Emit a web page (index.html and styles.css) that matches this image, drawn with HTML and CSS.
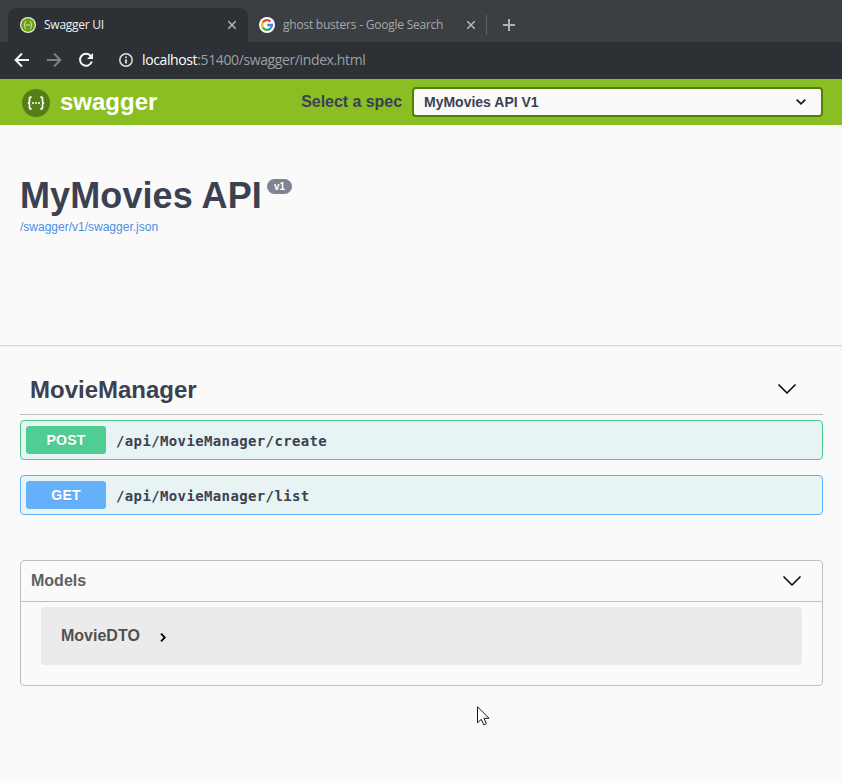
FILE: index.html
```html
<!DOCTYPE html>
<html lang="en">
<head>
<meta charset="utf-8">
<title>Swagger UI</title>
<link rel="stylesheet" href="styles.css">
</head>
<body>
<header class="browser">
  <div class="tabs">
    <div class="tab tab-active">
      <svg class="favicon" viewBox="0 0 16 16"><circle cx="8" cy="8" r="8" fill="#e8f0dc"/><circle cx="8" cy="8" r="6.8" fill="#6a9e12"/><path d="M6.2 4.2Q4.9 4.2 4.9 5.5V7L4 8l.9 1v1.5q0 1.3 1.3 1.3M9.8 4.2q1.3 0 1.3 1.3V7l.9 1-.9 1v1.5q0 1.3-1.3 1.3M5.8 8h4.4" fill="none" stroke="#d4e8b0" stroke-width="1"/></svg>
      <span class="tab-title title-swagger">Swagger UI</span>
      <svg class="close" viewBox="0 0 8 8"><path d="M.3.3l7.4 7.4M7.7.3L.3 7.7"/></svg>
    </div>
    <div class="tab tab-idle">
      <svg class="favicon" viewBox="0 0 16 16"><circle cx="8" cy="8" r="8" fill="#fff"/><g fill="none" stroke-width="2.3"><path d="M3.9 5.4A4.8 4.8 0 0 1 11.4 4.6" stroke="#ea4335"/><path d="M3.9 5.4A4.8 4.8 0 0 0 3.9 10.6" stroke="#fbbc05"/><path d="M3.9 10.6A4.8 4.8 0 0 0 11.2 11.6" stroke="#34a853"/><path d="M11.2 11.6A4.8 4.8 0 0 0 12.9 8H8.2" stroke="#4285f4"/></g></svg>
      <span class="tab-title title-google">ghost busters - Google Search</span>
      <svg class="close" viewBox="0 0 8 8"><path d="M.3.3l7.4 7.4M7.7.3L.3 7.7"/></svg>
    </div>
    <svg class="plus" viewBox="0 0 12 12"><path d="M6 0v12M0 6h12"/></svg>
  </div>
  <div class="toolbar">
    <svg class="nav" viewBox="0 0 16 16"><path d="M15 8H2M8 1.5L1.6 8 8 14.5"/></svg>
    <svg class="nav nav-off" viewBox="0 0 16 16"><path d="M1 8h13M8 1.5L14.4 8 8 14.5"/></svg>
    <svg class="nav" viewBox="0 0 16 16"><path d="M12.9 4.2A6 6 0 1 0 13.8 9.5"/><path d="M15 1v6H9z" class="solid"/></svg>
    <svg class="info" viewBox="0 0 14 14"><circle cx="7" cy="7" r="6.2"/><path d="M7 6.2v4.3M7 3.4v1.7" class="glyph"/></svg>
    <span class="url"><b>localhost</b>:51400/swagger/index.html</span>
  </div>
</header>
<div class="topbar">
  <svg class="logo" viewBox="0 0 28 28"><circle cx="14" cy="14" r="14" fill="#557f16"/><path d="M9.6 7.9q-2.1 0-2.1 2v2.4q0 1.7-1.7 1.7 1.7 0 1.7 1.7v2.4q0 2 2.1 2M18.4 7.9q2.1 0 2.1 2v2.4q0 1.7 1.7 1.7-1.7 0-1.7 1.7v2.4q0 2-2.1 2" fill="none" stroke="#fff" stroke-width="1.7"/><g fill="#fff"><circle cx="11" cy="14" r="1"/><circle cx="14" cy="14" r="1"/><circle cx="17" cy="14" r="1"/></g></svg>
  <span class="brand">swagger</span>
  <span class="select-label">Select a spec</span>
  <div class="select"><span>MyMovies API V1</span><svg class="select-arrow" viewBox="0 0 10 6"><path d="M.7.7L5 4.8 9.3.7"/></svg></div>
</div>
<section class="info-block">
  <h1><span class="api-name">MyMovies API</span><span class="version">v1</span></h1>
  <a class="spec-link">/swagger/v1/swagger.json</a>
</section>
<main>
  <div class="tag"><h2>MovieManager</h2><svg class="chevron" viewBox="0 0 18 10"><path d="M.5.5L9 9 17.5.5"/></svg></div>
  <div class="op post"><span class="method">POST</span><code>/api/MovieManager/create</code></div>
  <div class="op get"><span class="method">GET</span><code>/api/MovieManager/list</code></div>
  <section class="models">
    <div class="models-head"><h3>Models</h3><svg class="chevron" viewBox="0 0 18 10"><path d="M.5.5L9 9 17.5.5"/></svg></div>
    <div class="model"><span>MovieDTO</span><svg class="expand" viewBox="0 0 6 10"><path d="M.8.8L5 5 .8 9.2"/></svg></div>
  </section>
</main>
<svg class="cursor" viewBox="0 0 13 20"><path d="M.5.8v16l3.8-3.5 2.5 5.6 2.6-1.1-2.4-5.5h5z"/></svg>
</body>
</html>
```
FILE: styles.css
```css
* { box-sizing: border-box; }
body {
  margin: 0;
  height: 781px;
  overflow: hidden;
  background: #fafafa;
  color: #3b4151;
  font-family: "Liberation Sans", Arial, sans-serif;
}
svg { display: block; flex: none; overflow: visible; }
h1, h2, h3 { margin: 0; }
.browser { background: #2d3034; font-family: "Open Sans", sans-serif; }
.tabs { display: flex; height: 42px; padding: 8px 0 0 8px; background: #3b3f42; }
.tab { display: flex; align-items: center; height: 34px; font-size: 12px; }
.tab-active { width: 240px; padding: 0 12px; background: #2d3034; color: #f1f3f4; border-radius: 8px 8px 0 0; }
.tab-idle {
  width: 239px;
  padding: 0 12px 0 11px;
  color: #a5a9ad;
  background: linear-gradient(#606468, #606468) right center / 1px 20px no-repeat;
}
.favicon { width: 16px; height: 16px; margin-right: 8px; }
.tab-title { white-space: nowrap; line-height: 16px; }
.title-swagger { letter-spacing: -0.25px; }
.title-google { letter-spacing: -0.23px; }
.close { width: 8px; height: 8px; margin-left: auto; fill: none; stroke: #b7babd; stroke-width: 1.5; }
.plus { width: 12px; height: 12px; margin: 11px 0 0 16px; fill: none; stroke: #b0b3b6; stroke-width: 2; }
.toolbar { display: flex; align-items: center; height: 37px; padding-left: 14px; }
.nav { width: 16px; height: 16px; margin: -2px 16px 0 0; fill: none; stroke: #f4f5f6; stroke-width: 2; }
.nav-off { stroke: #7d8084; }
.nav .solid { fill: #f4f5f6; stroke: none; }
.info { width: 14px; height: 14px; margin: -2px 9px 0; fill: none; stroke: #dee0e2; stroke-width: 1.5; }
.info .glyph { stroke-width: 1.8; }
.url { margin-top: -1px; color: #9aa0a6; font-size: 14px; letter-spacing: -0.38px; line-height: 20px; white-space: nowrap; }
.url b { color: #fff; font-weight: 400; }
.topbar { display: flex; align-items: center; height: 46px; padding: 0 19px 0 22px; background: #89bf23; font-weight: 700; }
.logo { width: 28px; height: 28px; margin-top: 1px; }
.brand { margin-left: 10px; color: #fff; font-size: 24px; line-height: 28px; }
.select-label { margin: 0 10px 0 auto; font-size: 16px; letter-spacing: -0.05px; line-height: 20px; white-space: nowrap; }
.select {
  display: flex;
  align-items: center;
  justify-content: space-between;
  width: 411px;
  height: 30px;
  padding: 0 15px 0 10px;
  border: 2px solid #547f00;
  border-radius: 4px;
  background: #fafafa;
  font-size: 14px;
}
.select-arrow { width: 10px; height: 6px; fill: none; stroke: #16181c; stroke-width: 1.8; }
.info-block { height: 221px; padding: 50px 20px 0; border-bottom: 1px solid #d9d9d9; box-shadow: 0 1px 1px #eee; }
h1 { display: flex; font-size: 36px; line-height: 41px; }
.api-name { letter-spacing: .1px; }
.version {
  width: 25px;
  height: 15px;
  margin: 4px 0 0 5px;
  border-radius: 8px;
  background: #7d8492;
  color: #fff;
  font-size: 10px;
  line-height: 15px;
  text-align: center;
}
.spec-link { display: block; margin-top: 4px; color: #4990e2; font-size: 12px; line-height: 14px; }
main { padding: 20px 19px 0 20px; }
.tag {
  display: flex;
  align-items: center;
  justify-content: space-between;
  height: 49px;
  padding: 0 27px 0 10px;
  border-bottom: 1px solid #bfc0c4;
}
h2 { font-size: 24px; line-height: 28px; }
.chevron { width: 18px; height: 10px; fill: none; stroke: #000; stroke-width: 1.5; }
.tag .chevron { margin-top: -2px; }
.op { display: flex; align-items: center; height: 40px; margin: 5px 0 15px; padding: 0 5px; border: 1px solid; border-radius: 4px; background: #e8f4f4; }
.post { border-color: #49cc90; }
.get { border-color: #61affe; }
.method {
  width: 80px;
  height: 28px;
  border-radius: 3px;
  color: #fff;
  font-size: 14px;
  font-weight: 700;
  letter-spacing: .2px;
  line-height: 28px;
  text-align: center;
  text-shadow: 0 1px 0 rgba(0, 0, 0, .1);
}
.post .method { background: #50cd93; }
.get .method { background: #65b0fb; }
code { margin: 2px 0 0 10px; font: 700 14px/20px "DejaVu Sans Mono", monospace; letter-spacing: .37px; }
.models { height: 126px; margin-top: 45px; border: 1px solid #bfc0c4; border-radius: 4px; }
.models-head { display: flex; align-items: center; justify-content: space-between; height: 41px; padding: 0 21px 0 10px; border-bottom: 1px solid #bfc0c4; }
h3 { color: #606060; font-size: 16px; line-height: 20px; }
.model { display: flex; align-items: center; height: 58px; margin: 5px 20px 0; padding-left: 20px; border-radius: 4px; background: #ebebeb; color: #505050; font-size: 16px; font-weight: 700; }
.expand { width: 6px; height: 9px; margin: 2px 0 0 20px; fill: none; stroke: #000; stroke-width: 2; }
.cursor { position: absolute; left: 477px; top: 706px; width: 13px; height: 20px; fill: #fff; stroke: #17171f; stroke-width: 1; }
```
